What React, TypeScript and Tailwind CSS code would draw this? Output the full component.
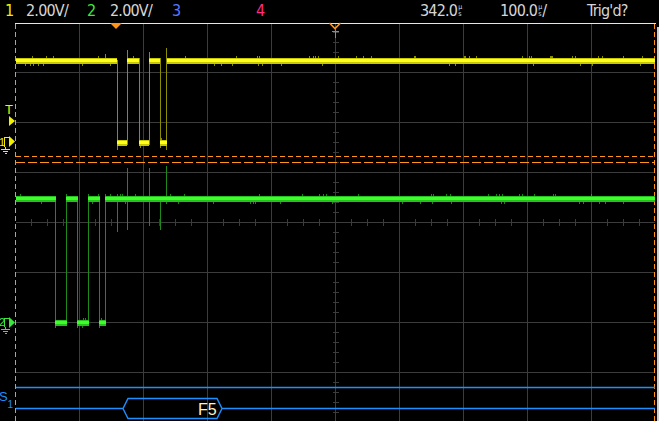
import React from 'react';

const YEL = '#ffff1a';
const YEL_DIM = '#8c8c00';
const GRN = '#3cff2a';
const GRN_DIM = '#1f8a1a';
const ORANGE = '#ff9419';
const BLUE = '#1e8fff';
const GRID = '#3c3c3c';

type Seg = [number, number];

// tiny seeded random so the noise is the same on every render
const rng = (seed: number) => {
  let s = seed;
  return () => {
    s = (s * 1103515245 + 12345) & 0x7fffffff;
    return s / 0x7fffffff;
  };
};

const noise = (segs: Seg[], c: number, seed: number) => {
  const r = rng(seed);
  let d = '';
  segs.forEach(([a, b]) => {
    for (let x = a + 1; x < b - 1; x++) {
      const v = r();
      if (v < 0.05) d += `M${x + 0.5} ${c - 5}v2`;
      else if (v < 0.08) d += `M${x + 0.5} ${c + 3}v2`;
    }
  });
  return d;
};

const Band = ({ segs, c, core, edge, seed }: { segs: Seg[]; c: number; core: string; edge: string; seed: number }) => (
  <g shapeRendering="crispEdges">
    {segs.map(([a, b], i) => (
      <g key={i}>
        <rect x={a} y={c - 3} width={b - a} height={6} fill={edge} />
        <rect x={a} y={c - 2} width={b - a} height={3} fill={core} />
      </g>
    ))}
    <path d={noise(segs, c, seed)} stroke={edge} strokeWidth={1} opacity={0.7} />
  </g>
);

const Micro = () => (
  <span className="inline-flex flex-col text-[7px] leading-[7px] ml-[1px] tracking-normal">
    <span>µ</span>
    <span>s</span>
  </span>
);

const Header = () => (
  <div className="flex h-[22px] items-center text-[16px] leading-[22px] tracking-[-0.8px] text-[#d6d6d6] whitespace-nowrap font-['DejaVu_Sans_Condensed','Liberation_Sans_Narrow','Liberation_Sans',sans-serif]">
    <span className="w-[26px] pl-[5px] text-[#f2f200]">1</span>
    <span className="w-[61px]">2.00V/</span>
    <span className="w-[23px] text-[#3ce83c]">2</span>
    <span className="w-[62px]">2.00V/</span>
    <span className="w-[84px] text-[#5a78ff]">3</span>
    <span className="w-[164px] text-[#ff2d80]">4</span>
    <span className="w-[80px] flex items-center">
      342.0
      <Micro />
    </span>
    <span className="w-[87px] flex items-center">
      100.0
      <Micro />/
    </span>
    <span>Trig'd?</span>
  </div>
);

const Screen = () => {
  const vx = [1, 2, 3, 4, 5, 6, 7, 8, 9].map((k) => 15 + 64 * k);
  const hy = [1, 2, 3, 4, 5, 6, 7].map((k) => 22 + 50 * k);
  const vTicks = Array.from({ length: 40 }, (_, k) => 22 + 10 * k).filter((y) => y > 24 && (y - 22) % 50 !== 0);
  const hTicks = Array.from({ length: 40 }, (_, k) => 15 + 16 * k).filter((x) => x > 16 && x < 655 && (x - 15) % 64 !== 0);

  const y1Hi: Seg[] = [[16, 117], [127, 139], [149, 160], [167, 655]];
  const y1Lo: Seg[] = [[117, 127], [139, 149], [160, 167]];
  const g2Hi: Seg[] = [[16, 56], [66, 78], [88, 100], [105, 655]];
  const g2Lo: Seg[] = [[55, 67], [77, 89], [99, 106]];

  const label = "font-['Liberation_Sans',Arial,sans-serif]";

  return (
    <svg width={659} height={399} viewBox="0 22 659 399" className="block">
      {/* graticule */}
      <g stroke={GRID} strokeWidth={1} shapeRendering="crispEdges">
        {vx.map((x) => (
          <line key={x} x1={x + 0.5} y1={24} x2={x + 0.5} y2={421} />
        ))}
        {hy.map((y) => (
          <line key={y} x1={16} y1={y + 0.5} x2={655} y2={y + 0.5} />
        ))}
        {vTicks.map((y) => (
          <line key={'v' + y} x1={333} y1={y + 0.5} x2={339} y2={y + 0.5} />
        ))}
        {hTicks.map((x) => (
          <line key={'h' + x} x1={x + 0.5} y1={219} x2={x + 0.5} y2={226} />
        ))}
      </g>

      {/* borders */}
      <g shapeRendering="crispEdges">
        <line x1={15} y1={23.5} x2={656} y2={23.5} stroke="#e6e6e6" />
        <line x1={15.5} y1={24} x2={15.5} y2={421} stroke={ORANGE} strokeDasharray="5 3" />
        <line x1={654.5} y1={24} x2={654.5} y2={421} stroke={ORANGE} strokeDasharray="5 3" />
        <rect x={657} y={27} width={2} height={394} fill="#cfcfcf" />
      </g>

      {/* trigger / time markers */}
      <polygon points="110,23 122,23 116,29" fill={ORANGE} />
      <path d="M329.5 23 L335 28.5 L340.5 23" fill="none" stroke={ORANGE} strokeWidth={1.6} />
      <path d="M335.5 29 V38 M332 31.5 H339" stroke="#8a8a8a" strokeWidth={1} shapeRendering="crispEdges" />

      {/* trigger level lines */}
      <g shapeRendering="crispEdges" stroke={ORANGE} strokeWidth={1}>
        <line x1={16} y1={156.5} x2={655} y2={156.5} strokeDasharray="5 3" />
        <line x1={16} y1={162.5} x2={655} y2={162.5} strokeDasharray="9 3" />
      </g>

      {/* channel 1 edges */}
      <g stroke={YEL_DIM} strokeWidth={1} shapeRendering="crispEdges">
        <line x1={117.5} y1={60} x2={117.5} y2={150} />
        <line x1={127.5} y1={50} x2={127.5} y2={145} />
        <line x1={139.5} y1={58} x2={139.5} y2={146} />
        <line x1={149.5} y1={52} x2={149.5} y2={145} />
        <line x1={160.5} y1={58} x2={160.5} y2={148} />
        <line x1={166.5} y1={48} x2={166.5} y2={150} />
        <line x1={105.5} y1={54} x2={105.5} y2={58} />
      </g>
      <Band segs={y1Hi} c={61} core={YEL} edge="#c8c800" seed={7} />
      <Band segs={y1Lo} c={143} core={YEL} edge="#c8c800" seed={11} />

      {/* channel 2 edges + crosstalk spikes */}
      <g stroke={GRN_DIM} strokeWidth={1} shapeRendering="crispEdges">
        <line x1={55.5} y1={196} x2={55.5} y2={328} />
        <line x1={66.5} y1={194} x2={66.5} y2={326} />
        <line x1={77.5} y1={198} x2={77.5} y2={328} />
        <line x1={88.5} y1={194} x2={88.5} y2={326} />
        <line x1={99.5} y1={198} x2={99.5} y2={328} />
        <line x1={105.5} y1={194} x2={105.5} y2={326} />
        <line x1={117.5} y1={200} x2={117.5} y2={232} />
        <line x1={127.5} y1={168} x2={127.5} y2={230} />
        <line x1={149.5} y1={168} x2={149.5} y2={226} />
        <line x1={160.5} y1={200} x2={160.5} y2={230} />
        <line x1={166.5} y1={166} x2={166.5} y2={204} />
      </g>
      <Band segs={g2Hi} c={199} core={GRN} edge="#25c21e" seed={23} />
      <Band segs={g2Lo} c={323} core={GRN} edge="#25c21e" seed={31} />

      {/* serial bus */}
      <g stroke={BLUE} fill="none" strokeWidth={1.4}>
        <line x1={16} y1={387.5} x2={655} y2={387.5} />
        <path d="M16 408.5 H123 L128 398.5 H217 L222 408.5 L217 418.5 H128 L123 408.5 M222 408.5 H655" />
      </g>
      <text x={198} y={414.5} fontSize={16} fill="#fff3c4" className={label}>
        F5
      </text>

      {/* left markers */}
      <text x={5} y={114} fontSize={13} fill="#f2f200" className={label}>
        T
      </text>
      <polygon points="9,116 15,121 9,126" fill="#f2f200" />

      <text x={-1} y={146} fontSize={11} fill="#f2f200" className={label}>
        1
      </text>
      <path
        d="M4.5 147 V137.5 H9 M5.5 147 V149 M1 149.5 H10 M3 151.5 H8 M4.5 153.5 H6.5"
        stroke="#f2f200"
        strokeWidth={1}
        fill="none"
        shapeRendering="crispEdges"
      />
      <polygon points="9,136 15,141.5 9,147" fill="#f2f200" />

      <text x={-1} y={326} fontSize={11} fill="#3ce83c" className={label}>
        2
      </text>
      <path
        d="M4.5 327 V318.5 H9 M5.5 327 V329 M1 329.5 H10 M3 331.5 H8 M4.5 333.5 H6.5"
        stroke="#3ce83c"
        strokeWidth={1}
        fill="none"
        shapeRendering="crispEdges"
      />
      <polygon points="9,317 15,322.5 9,328" fill="#3ce83c" />

      <text x={-1} y={401} fontSize={13} fill={BLUE} className={label}>
        S
      </text>
      <text x={7.5} y={408} fontSize={10} fill={BLUE} className={label}>
        1
      </text>
    </svg>
  );
};

const App = () => {
  return (
    <div className="w-[659px] h-[421px] bg-black overflow-hidden flex flex-col">
      <Header />
      <Screen />
    </div>
  );
};

export default App;
